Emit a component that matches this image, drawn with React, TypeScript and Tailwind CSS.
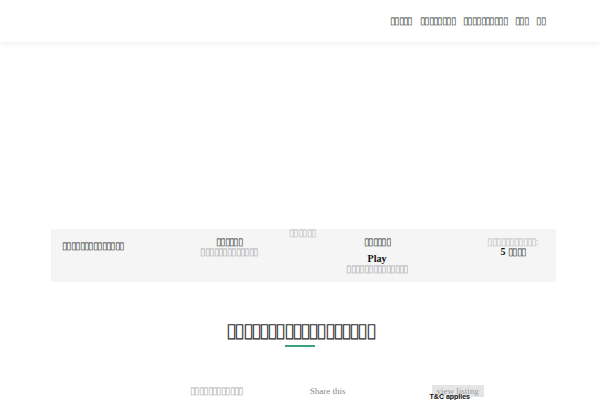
import React from "react";

const T = (n: number) => "\u25AF".repeat(n);

function Box({ n, className = "" }: { n: number; className?: string }) {
  return <span className={`tracking-[-1.6px] font-normal ${className}`}>{T(n)}</span>;
}

export default function App() {
  return (
    <div className="w-[600px] h-[400px] overflow-hidden bg-white font-['Liberation_Serif',serif]">
      <header className="h-[42px] bg-white shadow-[0_2px_6px_rgba(0,0,0,0.06)] flex items-center justify-end pr-[55px]">
        <nav className="flex gap-[8px] text-[10px] leading-[10px] text-[#333]">
          <Box n={5} />
          <Box n={8} />
          <Box n={10} />
          <Box n={3} />
          <Box n={2} />
        </nav>
      </header>

      <main className="pt-[187px]">
        <section className="ml-[51px] w-[505px] h-[53px] bg-[#f5f5f5] flex pl-[11px] text-[10px] leading-[10px]">
          <div className="w-[107px] pt-[12px] text-[#333]">
            <Box n={14} />
          </div>
          <div className="w-[120px] pt-[8px] flex flex-col items-center">
            <Box n={6} className="text-[#333]" />
            <Box n={13} className="text-[#aaa]" />
          </div>
          <div className="w-[28px] -mt-[1px] text-[#bbb]">
            <Box n={6} />
          </div>
          <div className="w-[120px] pt-[8px] flex flex-col items-center">
            <Box n={6} className="text-[#333]" />
            <span className="mt-[7px] font-bold text-[#111]">Play</span>
            <Box n={14} className="text-[#aaa]" />
          </div>
          <div className="w-[33px]" />
          <div className="w-[86px] pt-[8px] flex flex-col items-center">
            <span className="text-[#bbb]">
              <Box n={11} />:
            </span>
            <span className="font-bold text-[#111]">
              5 <Box n={4} className="text-[#333]" />
            </span>
          </div>
        </section>

        <h2 className="mt-[38px] text-center text-[20px] leading-[20px] text-[#333] font-normal tracking-[-2.8px]">
          {T(18)}
        </h2>
        <div className="mx-auto mt-[5px] w-[30px] h-[2px] bg-[#3aa17e]" />

        <div className="mt-[38px] flex items-start text-[9px] leading-[12px] text-[#888]">
          <Box n={12} className="ml-[190px] text-[10px] text-[#aaa]" />
          <span className="ml-[67px]">Share this</span>
          <div className="ml-[86px] flex flex-col items-start">
            <span className="bg-[#e5e5e5] px-[5px] text-[#999]">view listing</span>
            <span className="-mt-[5px] -ml-[2px] font-['Liberation_Sans',sans-serif] font-bold text-[7px] leading-[9px] text-[#111]">
              T&amp;C applies
            </span>
          </div>
        </div>
      </main>
    </div>
  );
}
